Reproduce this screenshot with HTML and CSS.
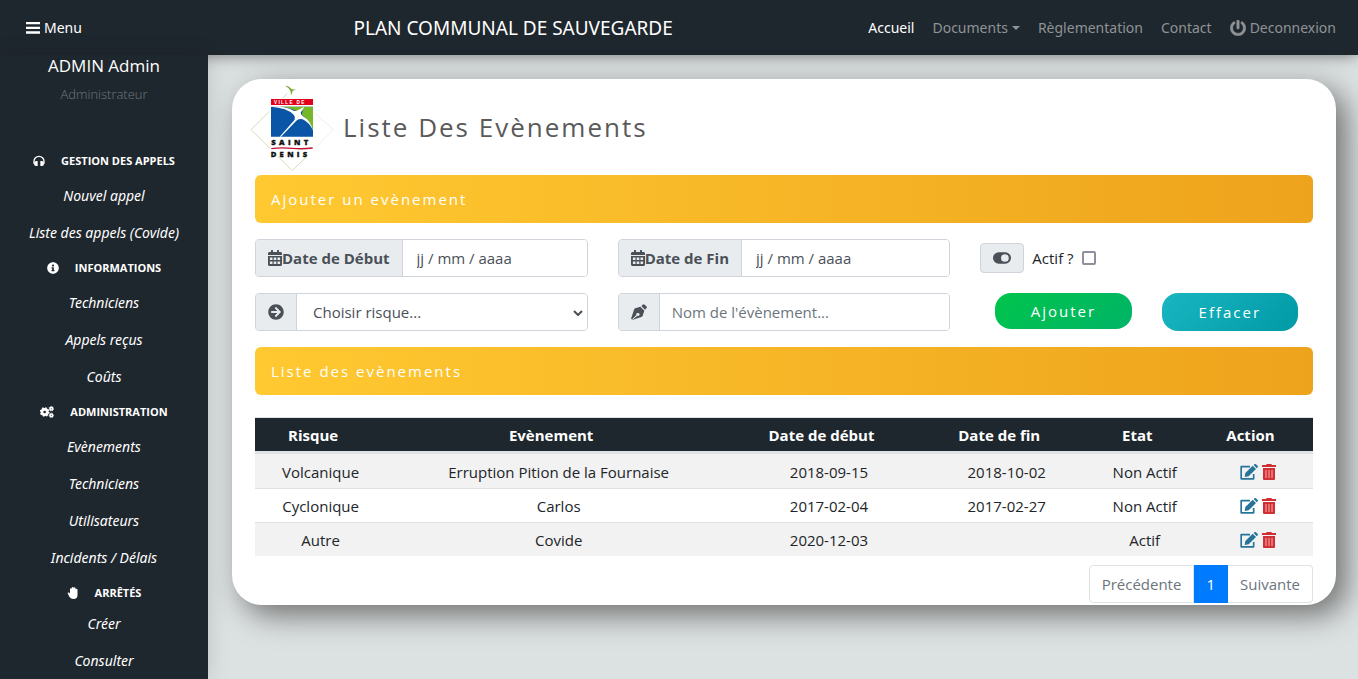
FILE: index.html
```html
<!DOCTYPE html>
<html lang="fr">
<head>
<meta charset="utf-8">
<meta name="viewport" content="width=device-width, initial-scale=1">
<title>Plan communal de sauvegarde</title>
<link rel="stylesheet" href="styles.css">
</head>
<body>
<svg class="sprite" aria-hidden="true">
  <symbol id="i-calendar" viewBox="0 0 448 512"><path fill-rule="evenodd" d="M0 464c0 26.500 21.500 48 48 48h352c26.500 0 48-21.500 48-48V192H0v272zM60 236h84v80H60zM182 236h84v80h-84zM304 236h84v80h-84zM60 366h84v80H60zM182 366h84v80h-84zM304 366h84v80h-84zM400 64h-48V16c0-8.800-7.200-16-16-16h-32c-8.800 0-16 7.200-16 16v48H160V16c0-8.800-7.200-16-16-16h-32c-8.800 0-16 7.200-16 16v48H48C21.500 64 0 85.500 0 112v48h448v-48c0-26.500-21.500-48-48-48z"/></symbol>
  <symbol id="i-edit" viewBox="0 0 54 48"><path fill="none" stroke="currentColor" stroke-width="5" stroke-linejoin="round" d="M30 8H3.500v36.500H41V30"/><path d="M16 27 38 5l10 10-22 22-12 2zM41 3l3-3q2-1 4 1l5 5q2 2 0 4l-3 3z"/></symbol>
  <symbol id="i-trash" viewBox="0 0 42 48"><path d="M0 3h12l2-3h14l2 3h12v6H0z"/><path d="M3 12h36v33q0 3-3 3H6q-3 0-3-3z"/><path fill="#f08f90" d="M10 18h4v24h-4zM19 18h4v24h-4zM28 18h4v24h-4z"/></symbol>
</svg>

<header class="topbar">
  <button class="menu-toggle" type="button">
    <svg class="icon-bars" viewBox="0 0 42 36" aria-hidden="true"><path d="M0 0h42v7H0zM0 14h42v7H0zM0 28h42v7H0z"/></svg>
    Menu
  </button>
  <div class="brand">PLAN COMMUNAL DE SAUVEGARDE</div>
  <nav class="topnav">
    <a class="active" href="#">Accueil</a>
    <a class="dropdown" href="#">Documents</a>
    <a href="#">Règlementation</a>
    <a href="#">Contact</a>
    <a class="with-icon" href="#"><svg class="icon" viewBox="0 0 512 512" aria-hidden="true"><path stroke="currentColor" stroke-width="14" d="M400 54.100c63 45 104 118.600 104 201.900 0 136.800-110.800 247.700-247.500 248C120 504.300 8.200 393 8 256.400 7.900 173.100 48.900 99.300 111.800 54.200c11.700-8.300 28-4.800 35 7.700L162.600 90c5.900 10.500 3.100 23.800-6.600 31-41.500 30.800-68 79.600-68 134.900-.1 92.300 74.500 168.100 168 168.100 91.600 0 168.600-74.200 168-169.100-.3-51.800-24.700-101.800-68.100-134-9.700-7.200-12.400-20.500-6.500-30.900l15.800-28.100c7-12.400 23.200-16.100 34.800-7.800zM296 264V24c0-13.300-10.700-24-24-24h-32c-13.300 0-24 10.700-24 24v240c0 13.300 10.700 24 24 24h32c13.300 0 24-10.700 24-24z"/></svg>Deconnexion</a>
  </nav>
</header>

<div class="layout">
  <aside class="sidebar">
    <div class="user-name">ADMIN Admin</div>
    <div class="user-role">Administrateur</div>
    <nav class="side-nav">
      <h2 class="side-title"><svg class="side-icon" viewBox="0 0 36 36" aria-hidden="true"><path fill="none" stroke="currentColor" stroke-width="4" d="M3 26v-7a15 15 0 0 1 30 0v7"/><path d="M14 18v15H9q-6 0-6-7t6-8zM22 18v15h5q6 0 6-7t-6-8z"/></svg>GESTION DES APPELS</h2>
      <a href="#">Nouvel appel</a>
      <a href="#">Liste des appels (Covide)</a>
      <h2 class="side-title"><svg class="side-icon" viewBox="0 0 512 512" aria-hidden="true"><path d="M256 8C119 8 8 119 8 256s111 248 248 248 248-111 248-248S393 8 256 8zm0 100c25 0 44 19 44 42s-19 42-44 42-42-19-42-42 19-42 42-42zm62 286H194v-52h24v-68h-24v-52h98v120h26z"/></svg>INFORMATIONS</h2>
      <a href="#">Techniciens</a>
      <a href="#">Appels reçus</a>
      <a href="#">Coûts</a>
      <h2 class="side-title"><svg class="side-icon wide" viewBox="0 0 42 36" aria-hidden="true"><g fill="none" stroke="currentColor"><circle cx="14" cy="18" r="8" stroke-width="8"/><circle cx="14" cy="18" r="12" stroke-width="5" stroke-dasharray="5 4.425"/><circle cx="34" cy="8" r="4" stroke-width="5"/><circle cx="34" cy="8" r="7" stroke-width="2" stroke-dasharray="3 2.500"/><circle cx="34" cy="28" r="4" stroke-width="5"/><circle cx="34" cy="28" r="7" stroke-width="2" stroke-dasharray="3 2.500"/></g></svg>ADMINISTRATION</h2>
      <a href="#">Evènements</a>
      <a href="#">Techniciens</a>
      <a href="#">Utilisateurs</a>
      <a href="#">Incidents / Délais</a>
      <h2 class="side-title compact"><svg class="side-icon" viewBox="0 0 34 36" aria-hidden="true"><path d="M8 20V7q0-3 2.500-3T13 6V3q0-3 3-3 2.500 0 3 3 1-2 3-2 2.500 0 2.500 3v3q1-2 3-2 3 0 3 4v14q0 13-12 13-8 0-12-6L2 21q-2-3 0-4.500 2-1 4 1z"/></svg>ARRÊTÉS</h2>
      <a href="#">Créer</a>
      <a href="#">Consulter</a>
    </nav>
  </aside>

  <main class="content">
    <section class="card">
      <div class="card-head">
        <svg class="logo" viewBox="30 15 255 261" role="img" aria-label="Ville de Saint Denis">
          <g fill="none" stroke-width="2">
            <path stroke="#b9cb93" d="M88 94 33 149l57 56M113 228l44 44 43-42M128 55l13-15"/>
            <path stroke="#e3e6e0" d="m226 100 54 49-56 57"/>
          </g>
          <path fill="#74ac2d" d="M135 17q14 1 20 11l14 1q-8 1-12 5 1 7-4 12 0-8-2-14-5-10-16-15z"/>
          <path fill="#e2001a" d="M93 57h126v18H93z"/>
          <text class="logo-strip" x="102" y="71">VILLE DE</text>
          <path fill="#0a55a5" d="M93 80h126v90H93z"/>
          <path fill="#76b82a" d="M118 80h101v70q-12-32-34-46l4-13-15 5q-20-14-56-16z"/>
          <path fill="#fff" d="M93 80q40-3 68 12 5 2 9 0l23-12-11 18q0 6 7 11 23 13 30 43-10-24-31-34-9-3-15 1l-4 3-46 48h-4l45-51q3-8-3-15-20-21-68-24z"/>
          <text class="logo-name" x="94" y="194">SAINT</text>
          <path fill="none" stroke="#c4122f" stroke-width="4" d="M94 206q30-4 62-1t62-1"/>
          <text class="logo-name" x="92" y="230">DENIS</text>
        </svg>
        <h1>Liste Des Evènements</h1>
      </div>

      <h2 class="band">Ajouter un evènement</h2>

      <form class="form-grid">
        <div class="group">
          <label class="addon" for="debut"><svg class="icon-cal" aria-hidden="true"><use href="#i-calendar"/></svg>Date de Début</label>
          <input class="date" id="debut" type="text" value="jj / mm / aaaa">
        </div>
        <div class="group">
          <label class="addon" for="fin"><svg class="icon-cal" aria-hidden="true"><use href="#i-calendar"/></svg>Date de Fin</label>
          <input class="date" id="fin" type="text" value="jj / mm / aaaa">
        </div>
        <div class="check-line">
          <span class="toggle-box"><svg class="icon-toggle" viewBox="0 0 56 36" aria-hidden="true"><path fill-rule="evenodd" d="M18 0h20a18 18 0 0 1 0 36H18a18 18 0 0 1 0-36zM37 6a12 12 0 1 0 0 24 12 12 0 0 0 0-24z"/></svg></span>
          <label for="actif">Actif ?</label>
          <input id="actif" type="checkbox">
        </div>
        <div class="group">
          <label class="addon" for="risque" aria-label="Risque"><svg class="icon" viewBox="0 0 512 512" aria-hidden="true"><path d="M256 8c137 0 248 111 248 248S393 504 256 504 8 393 8 256 119 8 256 8zm-28.900 143.600l75.500 72.400H120c-13.300 0-24 10.700-24 24v16c0 13.300 10.700 24 24 24h182.600l-75.500 72.400c-9.700 9.300-9.900 24.800-.4 34.300l11 10.900c9.400 9.400 24.600 9.400 33.900 0L404.300 273c9.400-9.400 9.400-24.600 0-33.900L271.600 106.300c-9.400-9.400-24.600-9.400-33.900 0l-11 10.900c-9.500 9.600-9.300 25.100.4 34.400z"/></svg></label>
          <div class="select-wrap">
            <select id="risque"><option>Choisir risque...</option></select>
            <svg class="chevron" viewBox="0 0 10 6" aria-hidden="true"><path d="M1 1l4 4 4-4"/></svg>
          </div>
        </div>
        <div class="group">
          <label class="addon" for="nom" aria-label="Nom"><svg class="icon" viewBox="0 0 48 48" aria-hidden="true"><path fill-rule="evenodd" d="M31 6l4-4q3-3 6 0l5 5q3 3 0 6l-4 4zM28 8l12 12-5 15q-1 3-4 4L4 48l-2-1 14-14q-1-4 2-6 3-1 6 1 3 3 1 6-2 3-6 1L5 47 0 44 9 17q1-3 4-4z"/></svg></label>
          <input id="nom" type="text" placeholder="Nom de l'évènement...">
        </div>
        <div class="actions">
          <button class="btn add" type="button">Ajouter</button>
          <button class="btn clear" type="reset">Effacer</button>
        </div>
      </form>

      <h2 class="band">Liste des evènements</h2>

      <table class="events">
        <colgroup><col class="c-risk"><col class="c-event"><col class="c-start"><col class="c-end"><col class="c-state"><col class="c-action"></colgroup>
        <thead>
          <tr><th>Risque</th><th>Evènement</th><th>Date de début</th><th>Date de fin</th><th>Etat</th><th>Action</th></tr>
        </thead>
        <tbody>
          <tr><td>Volcanique</td><td>Erruption Pition de la Fournaise</td><td>2018-09-15</td><td>2018-10-02</td><td>Non Actif</td>
            <td><div class="row-actions"><a class="edit" href="#" aria-label="Modifier"><svg><use href="#i-edit"/></svg></a><a class="trash" href="#" aria-label="Supprimer"><svg><use href="#i-trash"/></svg></a></div></td></tr>
          <tr><td>Cyclonique</td><td>Carlos</td><td>2017-02-04</td><td>2017-02-27</td><td>Non Actif</td>
            <td><div class="row-actions"><a class="edit" href="#" aria-label="Modifier"><svg><use href="#i-edit"/></svg></a><a class="trash" href="#" aria-label="Supprimer"><svg><use href="#i-trash"/></svg></a></div></td></tr>
          <tr><td>Autre</td><td>Covide</td><td>2020-12-03</td><td></td><td>Actif</td>
            <td><div class="row-actions"><a class="edit" href="#" aria-label="Modifier"><svg><use href="#i-edit"/></svg></a><a class="trash" href="#" aria-label="Supprimer"><svg><use href="#i-trash"/></svg></a></div></td></tr>
        </tbody>
      </table>

      <nav class="pager">
        <a href="#">Précédente</a><a class="current" href="#">1</a><a href="#">Suivante</a>
      </nav>
    </section>
  </main>
</div>
</body>
</html>
```

FILE: styles.css
```css
* { box-sizing: border-box; }

body {
  margin: 0;
  min-height: 100vh;
  display: flex;
  flex-direction: column;
  background: #dce1e1;
  color: #212529;
  font-family: "Open Sans", "Noto Sans", sans-serif;
  font-size: 15px;
  line-height: 24px;
}

a { color: inherit; text-decoration: none; }
h1, h2 { margin: 0; font-weight: 400; }
svg { fill: currentColor; flex: none; }
button, input, select { font: inherit; color: inherit; }
.sprite { position: absolute; width: 0; height: 0; }
.icon { width: 16px; height: 16px; }

/* Top bar */
.topbar {
  position: relative;
  z-index: 2;
  display: grid;
  grid-template-columns: 25% 1fr auto;
  align-items: center;
  height: 55px;
  padding: 0 22px 0 26px;
  background: #1f272e;
  color: #fff;
  font-family: "Noto Sans", sans-serif;
  font-size: 14px;
  box-shadow: 0 0 15px rgba(0, 0, 0, .5);
}
.menu-toggle {
  display: flex;
  align-items: center;
  gap: 4px;
  padding: 0;
  border: 0;
  background: none;
}
.icon-bars { width: 14px; height: 12px; }
.brand { font-size: 19px; white-space: nowrap; }
.topnav { display: flex; gap: 18px; color: #8f9396; white-space: nowrap; }
.topnav .active { color: #fff; }
.dropdown { display: flex; align-items: center; gap: 4px; }
.dropdown::after {
  content: "";
  border: 4px solid transparent;
  border-top-color: currentColor;
  border-bottom: 0;
}
.with-icon { display: flex; align-items: center; gap: 4px; }

.layout { display: flex; flex: 1; }

/* Sidebar */
.sidebar {
  position: relative;
  z-index: 3;
  flex: none;
  width: 208px;
  background: #1f272e;
  color: #fff;
  text-align: center;
  box-shadow: 0 0 20px rgba(0, 0, 0, .15);
}
.user-name { font-size: 17px; line-height: 22px; }
.user-role { margin-top: 5px; font-size: 13px; font-weight: 300; color: #6f777e; }
.side-nav {
  display: flex;
  flex-direction: column;
  padding-top: 38px;
  font-family: "Noto Sans", sans-serif;
  font-size: 14px;
  font-style: italic;
}
.side-nav a { line-height: 37px; }
.side-title {
  display: flex;
  justify-content: center;
  align-items: center;
  gap: 16px;
  margin: 4px 0;
  font-family: "Open Sans", sans-serif;
  font-size: 11px;
  line-height: 25px;
  font-style: normal;
  font-weight: 700;
}
.side-title.compact { margin-bottom: 0; }
.side-icon { width: 12px; height: 12px; }
.side-icon.wide { width: 14px; }

/* Card */
.content { flex: 1; min-width: 0; padding: 24px 22px 24px 24px; }
.card {
  padding: 6px 23px 2px;
  border-radius: 30px;
  background: #fff;
  box-shadow: 10px 10px 30px #707070;
}
.card-head { display: flex; align-items: flex-start; gap: 8px; height: 90px; margin-left: -5px; }
.logo { width: 85px; height: 87px; }
.logo-strip { font: 700 14px "Liberation Sans", sans-serif; letter-spacing: 4px; fill: #fff; }
.logo-name { font: 800 23px "Open Sans", sans-serif; letter-spacing: 10px; fill: #111; stroke: #111; stroke-width: 1; }
h1 { padding-top: 24px; color: #5a5a5a; font-size: 26px; line-height: 36px; letter-spacing: 2px; }
.band {
  padding: 12px 16px;
  border-radius: 6px;
  background: linear-gradient(90deg, #ffc931, #eea31c);
  color: #fff;
  font-size: 15px;
  letter-spacing: 2px;
}

/* Form */
.form-grid {
  display: grid;
  grid-template-columns: repeat(3, minmax(0, 1fr));
  gap: 16px 30px;
  padding: 16px 0;
}
.group {
  display: flex;
  height: 38px;
  border: 1px solid #ced4da;
  border-radius: 4px;
  overflow: hidden;
}
.addon {
  display: flex;
  align-items: center;
  padding: 0 12px;
  border-right: 1px solid #ced4da;
  background: #e9ecef;
  color: #495057;
  font-weight: 700;
  white-space: nowrap;
}
.icon-cal { width: 14px; height: 16px; }
.group input, .group select {
  width: 100%;
  min-width: 0;
  padding: 0 12px;
  border: 0;
  background: #fff;
  color: #495057;
  outline: 0;
}
.group .date { flex: 1; padding: 0 14px; }
.group input::placeholder { color: #6c757d; opacity: 1; }
.select-wrap { position: relative; display: flex; flex: 1; }
.group select { appearance: none; padding: 0 16px; }
.chevron {
  position: absolute;
  right: 4px;
  top: 16px;
  width: 10px;
  height: 6px;
  fill: none;
  stroke: #495057;
  stroke-width: 2;
  pointer-events: none;
}
.check-line { display: flex; align-items: center; gap: 8px; }
.toggle-box {
  display: flex;
  align-items: center;
  height: 30px;
  padding: 0 12px;
  border: 1px solid #ced4da;
  border-radius: 4px;
  background: #e9ecef;
  color: #495057;
}
.icon-toggle { width: 18px; height: 12px; }
.check-line input {
  appearance: none;
  width: 14px;
  height: 14px;
  margin: 0;
  border: 2px solid #8f8f9d;
  border-radius: 2px;
  background: #fff;
}
.actions {
  display: grid;
  grid-template-columns: 1fr 1fr;
  align-items: start;
  gap: 30px;
  padding: 0 15px;
}
.btn {
  height: 36px;
  padding: 0;
  border: 0;
  border-radius: 16px;
  color: #fff;
  letter-spacing: 2px;
}
.add { background: linear-gradient(135deg, #00c44c, #00b466); }
.clear { height: 38px; background: linear-gradient(135deg, #19b6c1, #0099a5); }

/* Table */
.events {
  width: 100%;
  margin-top: 22px;
  table-layout: fixed;
  border-collapse: separate;
  border-spacing: 0;
  text-align: center;
}
.c-risk { width: 12.4%; }
.c-event { width: 32.6%; }
.c-start { width: 18.5%; }
.c-end { width: 15.1%; }
.c-state { width: 11%; }
.c-action { width: 10.4%; }
.events th {
  padding: 5px 19px 4px 4px;
  border-top: 1px solid #dee2e6;
  border-bottom: 3px solid #dee2e6;
  background: #1f272e;
  color: #fff;
  white-space: nowrap;
}
.events td { padding: 6px 4px 4px; }
.events tr + tr td { padding-top: 5px; border-top: 1px solid #dee2e6; }
.events tbody tr:nth-child(odd) td { background: #f2f2f2; }
.row-actions { display: flex; justify-content: center; gap: 4px; }
.row-actions a { display: flex; align-items: center; }
.edit { color: #27749a; }
.edit svg { width: 18px; height: 16px; }
.trash { color: #cf3033; }
.trash svg { width: 14px; height: 16px; }

/* Pagination */
.pager { display: flex; justify-content: flex-end; margin-top: 9px; color: #6c757d; }
.pager a { padding: 6px 12px; border: 1px solid #dee2e6; line-height: 24px; }
.pager a + a { border-left: 0; }
.pager a:first-child { border-radius: 4px 0 0 4px; }
.pager a:last-child { border-radius: 0 4px 4px 0; }
.pager .current { border-color: #007bff; background: #007bff; color: #fff; }
```
